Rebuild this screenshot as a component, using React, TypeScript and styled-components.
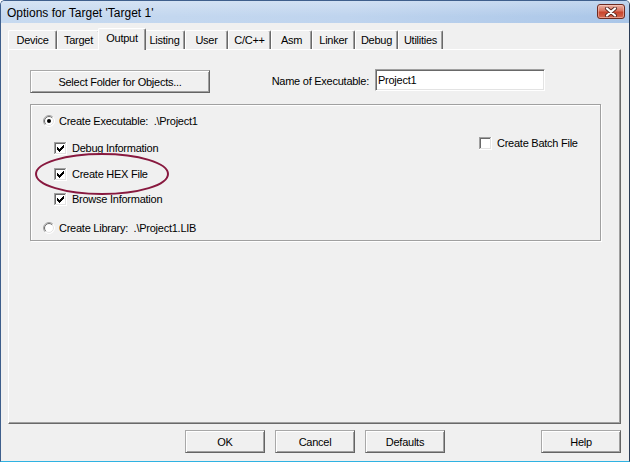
import React from 'react';
import styled, { createGlobalStyle } from 'styled-components';

const GlobalStyle = createGlobalStyle`
  html, body { margin: 0; padding: 0; background: #ffffff; }
  body {
    font-family: "Liberation Sans", Arial, sans-serif;
    font-size: 11px;
    letter-spacing: -0.25px;
    color: #000;
  }
  * { box-sizing: border-box; }
`;

const Window = styled.div`
  width: 630px;
  height: 462px;
  display: flex;
  flex-direction: column;
  background: #f0f0f0;
  border: 1px solid #3f5f8c;
  border-bottom-color: #2fb2e2;
  border-right-color: #2b3c55;
  border-radius: 5px 5px 0 0;
  overflow: hidden;
`;

const TitleBar = styled.div`
  height: 22px;
  flex: none;
  display: flex;
  align-items: flex-start;
  justify-content: space-between;
  padding: 0 4px 0 6px;
  background:
    linear-gradient(180deg, rgba(255, 255, 255, 0.28), rgba(255, 255, 255, 0) 70%),
    linear-gradient(90deg, #c7daf0 0%, #bfd4ee 55%, #aac6e8 100%);
`;

const TitleText = styled.span`
  font-size: 12px;
  letter-spacing: 0;
  line-height: 22px;
  color: #000;
  padding-top: 1px;
`;

const CloseButton = styled.div`
  width: 28px;
  height: 15px;
  margin-top: 3px;
  border: 1px solid #6e2a20;
  border-radius: 3px;
  display: flex;
  align-items: center;
  justify-content: center;
  background: linear-gradient(180deg, #eab2a4 0%, #d9735f 45%, #c8442d 55%, #d46a52 100%);
  box-shadow: inset 0 0 0 1px rgba(255, 220, 210, 0.45);
`;

const Client = styled.div`
  flex: 1;
  display: flex;
  flex-direction: column;
  padding: 5px 8px 8px 7px;
`;

const TabRow = styled.div`
  height: 21px;
  flex: none;
  display: flex;
  align-items: flex-end;
`;

const Tab = styled.div<{ $w: number; $active?: boolean }>`
  width: ${(p) => (p.$active ? p.$w + 4 : p.$w)}px;
  height: ${(p) => (p.$active ? 22 : 19)}px;
  margin: ${(p) => (p.$active ? '0 -2px -1px' : '0')};
  position: relative;
  z-index: ${(p) => (p.$active ? 2 : 1)};
  display: flex;
  align-items: center;
  justify-content: center;
  padding-bottom: ${(p) => (p.$active ? 3 : 0)}px;
  background: #f0f0f0;
  border-left: 1px solid #ffffff;
  border-top: 1px solid #ffffff;
  border-right: 1px solid #696969;
  border-radius: 2px 2px 0 0;
  box-shadow: inset -1px 0 #a0a0a0;
  white-space: nowrap;
`;

const Panel = styled.div`
  height: 375px;
  flex: none;
  border: 1px solid;
  border-color: #ffffff #696969 #696969 #ffffff;
  box-shadow: inset -1px -1px #a0a0a0;
  padding: 20px 0 0 21px;
`;

const TopRow = styled.div`
  width: 515px;
  display: grid;
  grid-template-columns: 180px 1fr 170px;
  align-items: start;
`;

const Button = styled.button<{ $w?: number }>`
  width: ${(p) => p.$w ?? 80}px;
  height: 23px;
  padding: 0;
  margin: 0;
  font-family: "Liberation Sans", Arial, sans-serif;
  font-size: 11px;
  letter-spacing: -0.25px;
  color: #000;
  background: #f0f0f0;
  border: 1px solid;
  border-color: #a8a8a8 #646464 #646464 #a8a8a8;
  box-shadow: inset 1px 1px #ffffff, inset -1px -1px #a0a0a0;
  cursor: default;
`;

const FieldLabel = styled.label`
  text-align: right;
  padding-right: 6px;
  line-height: 23px;
  white-space: nowrap;
`;

const TextField = styled.input`
  width: 170px;
  height: 22px;
  margin-top: -1px;
  padding: 0 2px;
  font-family: "Liberation Sans", Arial, sans-serif;
  font-size: 11px;
  letter-spacing: -0.25px;
  color: #000;
  background: #fff;
  border: 1px solid;
  border-color: #a0a0a0 #ffffff #ffffff #a0a0a0;
  box-shadow: inset 1px 1px #696969, inset -1px -1px #e3e3e3;
  outline: none;
`;

const Group = styled.div`
  margin-top: 11px;
  width: 571px;
  height: 137px;
  position: relative;
  border: 1px solid #a0a0a0;
  box-shadow: inset 1px 1px #ffffff, 1px 1px #ffffff;
  padding: 8px 0 0 12px;
  display: grid;
  grid-template-columns: 436px 1fr;
  align-items: start;
`;

const Column = styled.div<{ $top?: number }>`
  display: flex;
  flex-direction: column;
  padding-top: ${(p) => p.$top ?? 0}px;
`;

const OptionRow = styled.div<{ $indent?: number; $gap?: number }>`
  height: 16px;
  display: flex;
  align-items: center;
  margin-left: ${(p) => p.$indent ?? 0}px;
  margin-top: ${(p) => p.$gap ?? 0}px;
  white-space: nowrap;
`;

const OptionText = styled.span<{ $space: number }>`
  margin-left: ${(p) => p.$space}px;
  white-space: pre;
`;

const Annotation = styled.svg`
  position: absolute;
  left: 3px;
  top: 47px;
  pointer-events: none;
  overflow: visible;
`;

const ButtonRow = styled.div`
  margin-top: 6px;
  height: 23px;
  flex: none;
  display: flex;
  gap: 10px;
  padding-left: 177px;
`;

const Spacer = styled.div`
  flex: 1;
`;

const CheckBox = ({ checked }: { checked: boolean }) => {
  const px: [number, number][] = [
    [9, 3],
    [8, 4], [9, 4],
    [3, 5], [7, 5], [8, 5], [9, 5],
    [3, 6], [4, 6], [6, 6], [7, 6], [8, 6],
    [3, 7], [4, 7], [5, 7], [6, 7], [7, 7],
    [4, 8], [5, 8], [6, 8],
    [5, 9],
  ];
  return (
    <svg width="13" height="13" viewBox="0 0 13 13" shapeRendering="crispEdges">
      <rect x="0" y="0" width="13" height="13" fill="#ffffff" />
      <rect x="0" y="0" width="12" height="1" fill="#a0a0a0" />
      <rect x="0" y="0" width="1" height="12" fill="#a0a0a0" />
      <rect x="1" y="1" width="10" height="1" fill="#696969" />
      <rect x="1" y="1" width="1" height="10" fill="#696969" />
      <rect x="1" y="11" width="11" height="1" fill="#e3e3e3" />
      <rect x="11" y="1" width="1" height="11" fill="#e3e3e3" />
      {checked && px.map(([x, y]) => <rect key={`${x}-${y}`} x={x} y={y} width="1" height="1" fill="#000" />)}
    </svg>
  );
};

const Radio = ({ checked }: { checked: boolean }) => {
  const arc = (r: number, color: string, topLeft: boolean) => {
    const k = r * 0.7071;
    const a = topLeft ? [6 - k, 6 + k, 6 + k, 6 - k] : [6 + k, 6 - k, 6 - k, 6 + k];
    return <path d={`M${a[0]} ${a[1]} A${r} ${r} 0 0 1 ${a[2]} ${a[3]}`} stroke={color} strokeWidth="1" fill="none" />;
  };
  return (
    <svg width="12" height="12" viewBox="0 0 12 12">
      <circle cx="6" cy="6" r="5.5" fill="#ffffff" />
      {arc(5.5, '#a0a0a0', true)}
      {arc(5.5, '#ffffff', false)}
      {arc(4.5, '#696969', true)}
      {arc(4.5, '#e3e3e3', false)}
      {checked && <circle cx="6" cy="6" r="2" fill="#000" />}
    </svg>
  );
};

const tabs = [
  { label: 'Device', w: 49 },
  { label: 'Target', w: 43 },
  { label: 'Output', w: 44, active: true },
  { label: 'Listing', w: 41 },
  { label: 'User', w: 43 },
  { label: 'C/C++', w: 43 },
  { label: 'Asm', w: 41 },
  { label: 'Linker', w: 43 },
  { label: 'Debug', w: 43 },
  { label: 'Utilities', w: 45 },
];

export default function App() {
  return (
    <>
      <GlobalStyle />
      <Window>
        <TitleBar>
          <TitleText>Options for Target 'Target 1'</TitleText>
          <CloseButton>
            <svg width="14" height="10" viewBox="0 0 14 10">
              <path d="M3 1.5 L11 8.5 M11 1.5 L3 8.5" stroke="#5a2a24" strokeWidth="4" strokeLinecap="round" />
              <path d="M3 1.5 L11 8.5 M11 1.5 L3 8.5" stroke="#ffffff" strokeWidth="2.2" strokeLinecap="round" />
            </svg>
          </CloseButton>
        </TitleBar>
        <Client>
          <TabRow>
            {tabs.map((t) => (
              <Tab key={t.label} $w={t.w} $active={t.active}>
                {t.label}
              </Tab>
            ))}
          </TabRow>
          <Panel>
            <TopRow>
              <Button $w={180}>Select Folder for Objects...</Button>
              <FieldLabel>Name of Executable:</FieldLabel>
              <TextField readOnly value="Project1" />
            </TopRow>
            <Group>
              <Column>
                <OptionRow>
                  <Radio checked />
                  <OptionText $space={4}>{'Create Executable:  .\\Project1'}</OptionText>
                </OptionRow>
                <OptionRow $indent={11} $gap={11}>
                  <CheckBox checked />
                  <OptionText $space={5}>Debug Information</OptionText>
                </OptionRow>
                <OptionRow $indent={11} $gap={10}>
                  <CheckBox checked />
                  <OptionText $space={5}>Create HEX File</OptionText>
                </OptionRow>
                <OptionRow $indent={11} $gap={9}>
                  <CheckBox checked />
                  <OptionText $space={5}>Browse Information</OptionText>
                </OptionRow>
                <OptionRow $gap={13}>
                  <Radio checked={false} />
                  <OptionText $space={4}>{'Create Library:  .\\Project1.LIB'}</OptionText>
                </OptionRow>
              </Column>
              <Column $top={22}>
                <OptionRow>
                  <CheckBox checked={false} />
                  <OptionText $space={5}>Create Batch File</OptionText>
                </OptionRow>
              </Column>
              <Annotation width="136" height="44" viewBox="0 0 136 44">
                <ellipse cx="68" cy="22" rx="66" ry="20" fill="none" stroke="#88193f" strokeWidth="2" />
              </Annotation>
            </Group>
          </Panel>
          <ButtonRow>
            <Button>OK</Button>
            <Button>Cancel</Button>
            <Button>Defaults</Button>
            <Spacer />
            <Button>Help</Button>
          </ButtonRow>
        </Client>
      </Window>
    </>
  );
}
